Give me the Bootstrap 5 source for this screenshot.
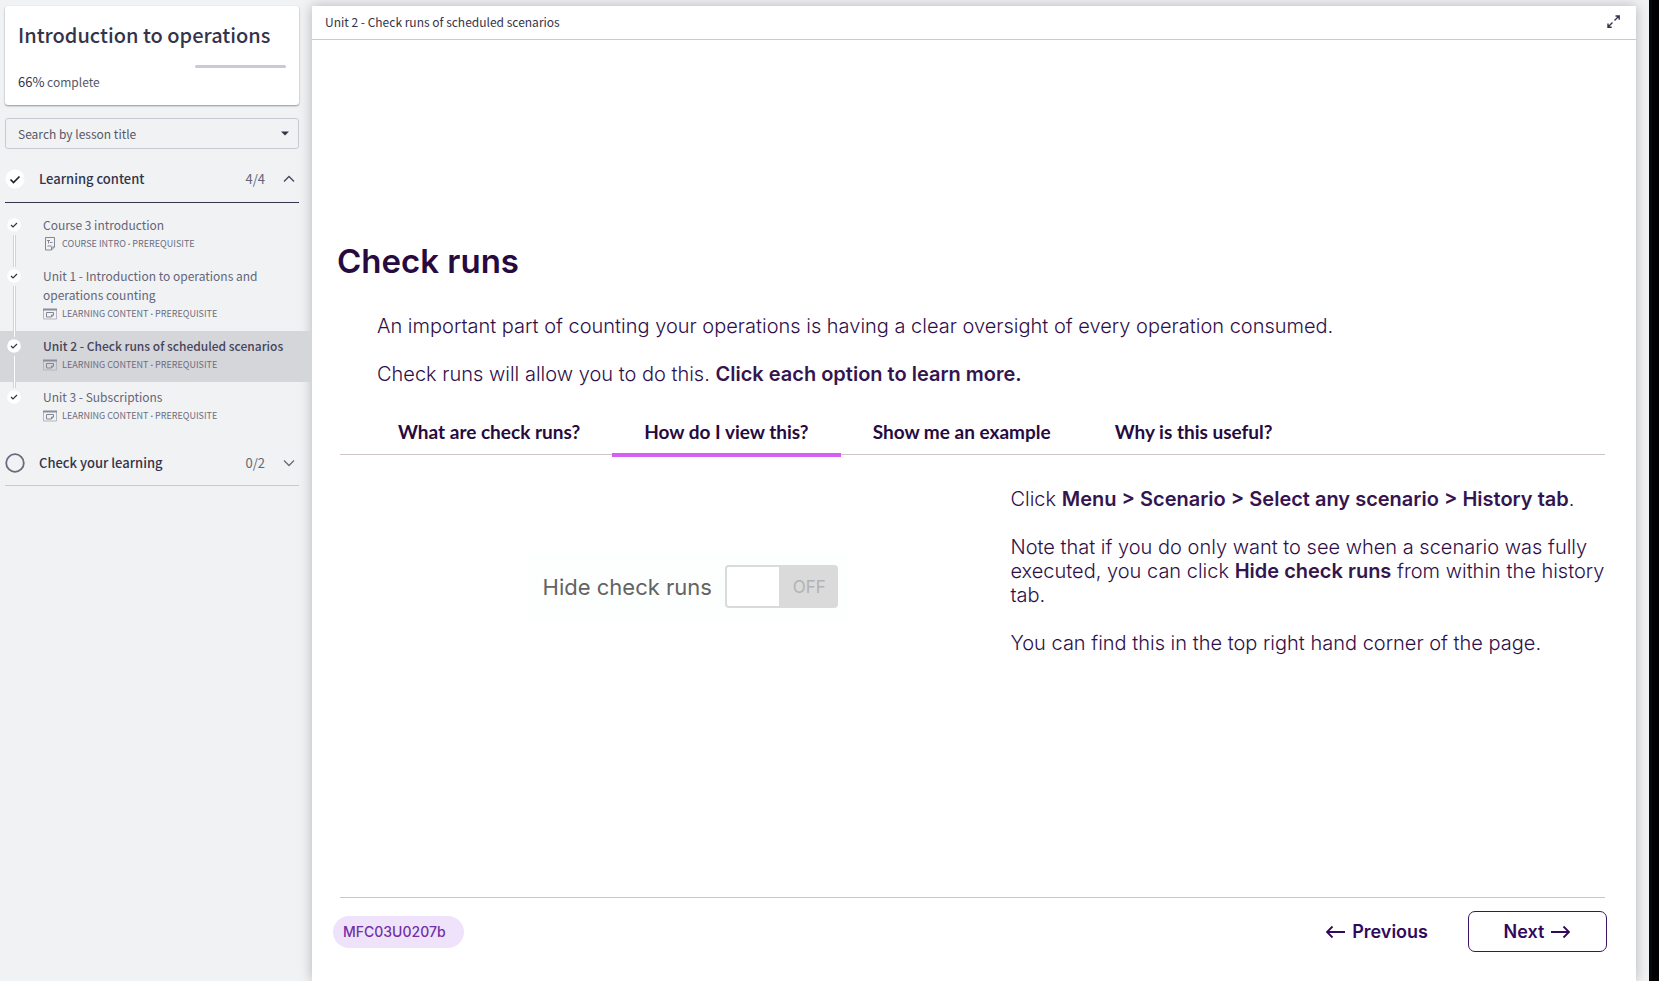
<!DOCTYPE html>
<html lang="en">
<head>
<meta charset="utf-8">
<meta name="viewport" content="width=device-width, initial-scale=1">
<title>Introduction to operations</title>
<link href="https://cdn.jsdelivr.net/npm/bootstrap@5.3.0/dist/css/bootstrap.min.css" rel="stylesheet">
<style>
  :root { --ink: #33344a; --muted-ink: #646577; --line: #c8c9d3; --plum: #34154f; }
  body { background: #f1f2f4; color: var(--ink); font-family: "Noto Sans CJK SC", "Noto Sans", sans-serif; font-size: 12px; line-height: 19px; }
  a { color: inherit; text-decoration: none; }
  .page-edge { width: 10px; background: #000; border-left: 3px solid #06080f; }

  /* Sidebar */
  .course-nav { width: 312px; }
  .course-inset { margin-left: 5px; margin-right: 13px; }
  .course-card { margin-top: 6px; height: 99px; padding: 14px 13px 12px; border-radius: 3px; background: #fff; box-shadow: 0 1px 2px rgba(0,0,0,.4); }
  .course-title { font-size: 20px; line-height: 30px; font-weight: 500; margin: 0 0 15px; white-space: nowrap; }
  .course-bar { height: 3px; border-radius: 2px; background: #fff; }
  .course-bar .progress-bar { background: #fff; }
  .course-bar .bar-rest { background: #c9cad6; border-radius: 2px; }
  .course-done { margin: 4px 0 0; color: #565766; }
  .course-done span { color: var(--ink); font-size: 13px; }
  .lesson-search { margin-top: 13px; height: 31px; border: 1px solid var(--line); border-radius: 3px; background-color: transparent; color: #565766; font-size: 12px; line-height: 19px; padding: 4px 30px 5px 12px; width: calc(100% - 18px);
    background-image: url("data:image/svg+xml,%3csvg xmlns='http://www.w3.org/2000/svg' viewBox='0 0 8 5'%3e%3cpath fill='%2333344a' d='M0 .5h8L4 4.5z'/%3e%3c/svg%3e"); background-size: 8px 5px; background-position: right 9px center; }
  .group-toggle { width: calc(100% - 18px); height: 54px; padding: 7px 4px 0 0; border: 0; border-bottom: 1px solid var(--ink); background: none; color: var(--ink); font-weight: 500; font-size: 13px; line-height: 20px; text-align: left; }
  .group-toggle.closed { border-color: var(--line); height: 53px; padding-top: 8px; }
  .group-toggle .count { font-weight: 400; font-size: 13px; color: var(--muted-ink); margin-right: 18px; }
  .group-toggle .group-mark { margin-right: 14px; }
  .lesson-list { margin: 7px 0 0; }
  .lesson { position: relative; display: flex; padding: 5px 12px 9px 7px; color: var(--muted-ink); }
  .lesson .dot { margin-top: 3px; margin-right: 22px; flex: none; }
  .lesson:not(.final)::after { content: ""; position: absolute; z-index: 1; left: 13px; top: 25px; bottom: -6px; width: 3px; background: #fff; border: solid #d2d3d9; border-width: 0 1px; }
  .lesson.current { background: #d5d6da; color: #44455c; }
  .lesson.current .lesson-name { font-weight: 500; white-space: nowrap; }
  .lesson-meta { height: 18px; margin-top: 1px; margin-bottom: -1px; font-size: 9px; line-height: 18px; color: #6c6d7e; }
  .lesson-meta svg { width: 14px; margin-right: 5px; flex: none; }
  .lesson-meta i { font: 700 9px/18px "Noto Sans", sans-serif; margin: 0 2px; }

  /* Player */
  .player { margin-top: 6px; margin-right: 13px; background: #fff; box-shadow: 0 0 12px rgba(0,0,0,.25); }
  .player-head { height: 34px; padding: 0 16px 3px 13px; border-bottom: 1px solid var(--line); font-size: 12px; }
  .icon-button { border: 0; padding: 0; background: none; display: flex; }
  .slide { padding: 201px 31px 29px 28px; color: #2f0f4a; font-family: Inter, sans-serif; font-size: 20px; line-height: 24px; font-weight: 300; }
  .slide strong { font-weight: 600; color: var(--plum); }
  .slide-title { font-family: Inter, sans-serif; font-weight: 600; font-size: 33px; line-height: 40px; color: #270b40; margin: 0 0 33px -3px; }
  .slide-intro { padding-left: 37px; }
  .slide-intro p, .slide-notes p { margin: 0 0 24px; }
  .slide-tabs { border-bottom: 1px solid #cfc4c8; height: 44px; margin-top: 1px; padding-left: 26px; }
  .slide-tabs .nav-link { height: 46px; padding: 2px 32px 2px; border: 0; border-bottom: 4px solid transparent; border-radius: 0; color: #270b40; font-family: Lato, sans-serif; font-size: 19px; font-weight: 700; line-height: 24px; background: none; white-space: nowrap; }
  .slide-tabs .nav-link.active { border-bottom-color: #d55ff5; }
  .slide-notes { flex: 0 0 47%; padding-top: 32px; }
  .demo-area { padding-left: 25px; }
  .toggle-demo { margin: 96px auto 0; padding: 14px 9px 14px 14px; gap: 13px; background: #fdfefe; color: #636363; font-size: 22px; font-weight: 400; height: 71px; align-self: flex-start; }
  .demo-switch { position: relative; }
  .demo-switch input { appearance: none; display: block; margin: 0; width: 113px; height: 43px; border: 2px solid #dadada; border-radius: 4px; background: linear-gradient(90deg, #fff 52px, #dadada 52px); }
  .demo-switch span { position: absolute; right: 12px; top: 10px; font-size: 17px; color: #b2b2b2; pointer-events: none; }
  .slide-foot { border-top: 1px solid #cdc4c8; padding-top: 13px; }
  .slide-code { margin-left: -7px; padding: 0 18px 0 10px; border-radius: 16px; background: #efe3fb; color: #7130a5; font-size: 14px; font-weight: 500; line-height: 32px; }
  .step { display: flex; align-items: center; justify-content: center; height: 41px; gap: 6px; color: #310a5c; font-size: 18px; font-weight: 600; border: 0; background: none; padding: 0; }
  .step-next { width: 139px; margin-right: -2px; border: 1px solid #3b1466; border-radius: 7px; }
</style>
</head>
<body>
<svg class="d-none" aria-hidden="true">
  <symbol id="tick" viewBox="0 0 14 14"><circle cx="7" cy="7" r="6.8" fill="#fff"/><path d="M4 7l2 2 4-4" fill="none" stroke="#33344a" stroke-width="1.200"/></symbol>
  <symbol id="content" viewBox="0 0 14 12"><path d="M.5 1.500h13v9.500H.5z" fill="none" stroke="#b4b5c0"/><path d="M0 .5h14v2H0z" fill="#8b8c9b"/><path d="M3.500 4.500h7v2.500l-2 2h-5z M10.500 7h-2v2" fill="none" stroke="#858695"/></symbol>
</svg>
<div class="d-flex min-vh-100">
  <nav class="course-nav flex-shrink-0" aria-label="Course">
    <section class="course-card course-inset">
      <h1 class="course-title">Introduction to operations</h1>
      <div class="course-bar d-flex" role="progressbar" aria-label="Course progress" aria-valuenow="66" aria-valuemin="0" aria-valuemax="100">
        <div class="progress-bar" style="width:66%"></div><div class="bar-rest flex-fill"></div>
      </div>
      <p class="course-done"><span>66%</span> complete</p>
    </section>
    <select class="form-select lesson-search course-inset" aria-label="Search by lesson title"><option>Search by lesson title</option></select>
    <button class="group-toggle course-inset d-flex align-items-center" type="button" aria-expanded="true">
      <svg class="group-mark" width="20" height="20" viewBox="0 0 20 20"><circle cx="10" cy="10" r="9.500" fill="#fff"/><path d="M5.500 10.500l3 3 6-6" fill="none" stroke="#222" stroke-width="1.700"/></svg>
      <span class="flex-fill">Learning content</span><span class="count">4/4</span>
      <svg width="12" height="8" viewBox="0 0 12 8"><path d="M1 6.500l5-5 5 5" fill="none" stroke="#44455c" stroke-width="1.300"/></svg>
    </button>
    <div class="lesson-list">
      <a class="lesson" href="#"><svg class="dot" width="14" height="14"><use href="#tick"/></svg>
        <div><div class="lesson-name">Course 3 introduction</div>
          <div class="lesson-meta d-flex align-items-center"><svg height="14" viewBox="0 0 14 14"><path d="M2.500 .5h9v9.500l-3 3h-6z M11.500 10h-3v3" fill="none" stroke="#858695"/><path d="M4 3.500h3 M5.500 3.500v3 M7 5.500h2.500 M4.500 9h4" fill="none" stroke="#858695"/></svg>COURSE INTRO<i>·</i>PREREQUISITE</div></div></a>
      <a class="lesson" href="#"><svg class="dot" width="14" height="14"><use href="#tick"/></svg>
        <div><div class="lesson-name">Unit 1 - Introduction to operations and operations counting</div>
          <div class="lesson-meta d-flex align-items-center"><svg height="12"><use href="#content"/></svg>LEARNING CONTENT<i>·</i>PREREQUISITE</div></div></a>
      <a class="lesson current" href="#" aria-current="page"><svg class="dot" width="14" height="14"><use href="#tick"/></svg>
        <div><div class="lesson-name">Unit 2 - Check runs of scheduled scenarios</div>
          <div class="lesson-meta d-flex align-items-center"><svg height="12"><use href="#content"/></svg>LEARNING CONTENT<i>·</i>PREREQUISITE</div></div></a>
      <a class="lesson final" href="#"><svg class="dot" width="14" height="14"><use href="#tick"/></svg>
        <div><div class="lesson-name">Unit 3 - Subscriptions</div>
          <div class="lesson-meta d-flex align-items-center"><svg height="12"><use href="#content"/></svg>LEARNING CONTENT<i>·</i>PREREQUISITE</div></div></a>
    </div>
    <button class="group-toggle closed course-inset d-flex align-items-center" type="button" aria-expanded="false">
      <svg class="group-mark" width="20" height="20" viewBox="0 0 20 20"><circle cx="10" cy="10" r="8.800" fill="none" stroke="#6a6b7c" stroke-width="1.800"/></svg>
      <span class="flex-fill">Check your learning</span><span class="count">0/2</span>
      <svg width="12" height="8" viewBox="0 0 12 8"><path d="M1 1.500l5 5 5-5" fill="none" stroke="#6a6b7c" stroke-width="1.300"/></svg>
    </button>
  </nav>

  <main class="player flex-fill d-flex flex-column">
    <header class="player-head d-flex align-items-center justify-content-between">
      <span>Unit 2 - Check runs of scheduled scenarios</span>
      <button class="icon-button" type="button" aria-label="Full screen"><svg width="13" height="13" viewBox="0 0 13 13" fill="none" stroke="#33344a" stroke-width="1.400"><path d="M8.500 1h3.700v3.700M12 1L7.500 5.500M1 8.500v3.700h3.700M1 12l4.500-4.500"/></svg></button>
    </header>
    <article class="slide flex-fill d-flex flex-column">
      <h2 class="slide-title">Check runs</h2>
      <div class="slide-intro">
        <p>An important part of counting your operations is having a clear oversight of every operation consumed.</p>
        <p>Check runs will allow you to do this. <strong>Click each option to learn more.</strong></p>
      </div>
      <div class="slide-tabs nav flex-nowrap" role="tablist">
        <button class="nav-link" role="tab" type="button">What are check runs?</button>
        <button class="nav-link active" role="tab" type="button" aria-selected="true">How do I view this?</button>
        <button class="nav-link" role="tab" type="button">Show me an example</button>
        <button class="nav-link" role="tab" type="button">Why is this useful?</button>
      </div>
      <div class="d-flex">
        <div class="demo-area flex-fill d-flex">
          <div class="toggle-demo d-flex align-items-center">
            <label for="hideChecks">Hide check runs</label>
            <div class="demo-switch"><input type="checkbox" role="switch" id="hideChecks"><span>OFF</span></div>
          </div>
        </div>
        <div class="slide-notes">
          <p>Click <strong>Menu &gt; Scenario &gt; Select any scenario &gt; History tab</strong>.</p>
          <p>Note that if you do only want to see when a scenario was fully executed, you can click <strong>Hide check runs</strong> from within the history tab.</p>
          <p>You can find this in the top right hand corner of the page.</p>
        </div>
      </div>
      <footer class="slide-foot mt-auto d-flex align-items-center">
        <span class="slide-code me-auto">MFC03U0207b</span>
        <button class="step me-4" type="button"><svg width="21" height="14" viewBox="0 0 21 14" fill="none" stroke="currentColor" stroke-width="1.800"><path d="M20 7H2M7.500 1.500L2 7l5.500 5.500"/></svg>Previous</button>
        <button class="step step-next ms-3" type="button">Next<svg width="21" height="14" viewBox="0 0 21 14" fill="none" stroke="currentColor" stroke-width="1.800"><path d="M1 7h18M13.500 1.500L19 7l-5.500 5.500"/></svg></button>
      </footer>
    </article>
  </main>
  <div class="page-edge flex-shrink-0"></div>
</div>
<script src="https://cdn.jsdelivr.net/npm/bootstrap@5.3.0/dist/js/bootstrap.bundle.min.js"></script>
</body>
</html>
